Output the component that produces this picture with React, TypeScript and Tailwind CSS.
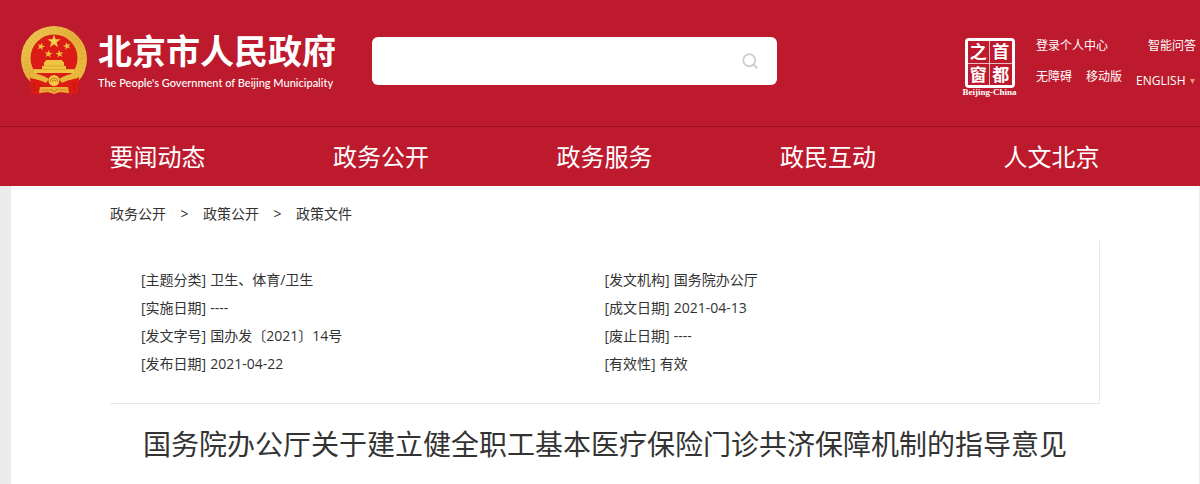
import { Search } from 'lucide-react';

const navItems = ['要闻动态', '政务公开', '政务服务', '政民互动', '人文北京'];

const breadcrumbs = ['政务公开', '政策公开', '政策文件'];

const details = [
  { label: '主题分类', value: '卫生、体育/卫生' },
  { label: '发文机构', value: '国务院办公厅' },
  { label: '实施日期', value: '----' },
  { label: '成文日期', value: '2021-04-13' },
  { label: '发文字号', value: '国办发〔2021〕14号' },
  { label: '废止日期', value: '----' },
  { label: '发布日期', value: '2021-04-22' },
  { label: '有效性', value: '有效' },
];

const starPoints = '0,-10 2.3,-3.1 9.5,-3.1 3.7,1.2 5.9,8.1 0,3.9 -5.9,8.1 -3.7,1.2 -9.5,-3.1 -2.3,-3.1';

const smallStars = [
  'translate(20 20.5) rotate(15) scale(.42)',
  'translate(46 20) rotate(-15) scale(.42)',
  'translate(27.5 28) rotate(8) scale(.42)',
  'translate(38.5 28) rotate(-8) scale(.42)',
];

function Emblem() {
  return (
    <svg className="h-[70px] w-[67px] shrink-0" viewBox="0 0 67 70" aria-hidden="true">
      <defs>
        <linearGradient id="gold" x1="0" y1="0" x2="1" y2="1">
          <stop offset="0" stopColor="#f0cb58" />
          <stop offset=".5" stopColor="#e3ae38" />
          <stop offset="1" stopColor="#efc244" />
        </linearGradient>
      </defs>
      <circle cx="33" cy="33" r="33" fill="url(#gold)" />
      <circle cx="33" cy="33" r="29" fill="none" stroke="#c98a25" strokeWidth="5" strokeDasharray="1 3" opacity=".2" />
      <circle cx="33" cy="32" r="23.5" fill="#da1b16" />
      <polygon points={starPoints} transform="translate(33 15.5) scale(.7)" fill="#f5cf4a" />
      {smallStars.map((transform) => (
        <polygon key={transform} points={starPoints} transform={transform} fill="#f0bd3c" />
      ))}
      {/* gate tower */}
      <path d="M25 34h16l1 2H24zM23 36h20v4h2v3h8v4H13v-4h8v-3h2z" fill="#f0c440" />
      <path d="M22 40h22M14 43.5h38" stroke="#d79a2a" strokeWidth=".6" />
      {/* ribbons, cogwheel and knot */}
      <path d="M9 51 10 67 19 69 21 67h24l2 2 10-2 1-16-10 3H18z" fill="#dc1b15" />
      <path d="M11 47c6 1 13 3 17 6l-3 4c-6-3-11-4-16-5zM55 47c-6 1-13 3-17 6l3 4c6-3 11-4 16-5z" fill="#e9b63b" />
      <path d="M19 61h28l1 6-9-1-6 2-6-2-9 1z" fill="#e9b136" />
      <circle cx="33" cy="54.5" r="5.5" fill="#f2c846" />
      <path d="M29 56a4 4 0 0 1 8 0M31 56a2 2 0 0 1 4 0" fill="none" stroke="#c67d1b" />
      <path d="M29 63l4 3 4-3" fill="none" stroke="#c8711b" />
      <path d="M13 57v8M53 57v8" stroke="#b71313" />
      <path d="M20 64h8M38 64h8" stroke="#cf7b1e" strokeWidth=".8" />
    </svg>
  );
}

function CapitalWindow() {
  return (
    <a href="#" className="flex w-[55px] shrink-0 flex-col items-center">
      <span className="grid size-[50px] grid-cols-2 grid-rows-2 gap-px rounded-sm border-[3px] border-white bg-white/70 text-[17px] leading-none font-bold">
        {['之', '首', '窗', '都'].map((char) => (
          <span key={char} className="flex items-center justify-center bg-[#bd1a2d]">
            {char}
          </span>
        ))}
      </span>
      <span className="font-['Liberation_Serif',serif] text-[9px] leading-2 font-bold whitespace-nowrap">
        Beijing-China
      </span>
    </a>
  );
}

function Header() {
  return (
    <header className="bg-[#bd1a2d] text-white">
      <div className="flex h-[126px] items-start pl-[21px]">
        <a href="#" className="mt-[26px] flex shrink-0 gap-[10px]">
          <Emblem />
          <span className="mt-1 block w-[242px]">
            <span className="block text-[34px] leading-[42px] font-bold whitespace-nowrap">北京市人民政府</span>
            <span className="block font-['Lato','Noto_Sans_CJK_SC',sans-serif] text-[11px] leading-[22px] font-medium whitespace-nowrap">
              The People's Government of Beijing Municipality
            </span>
          </span>
        </a>

        <form className="mt-[37px] ml-8 flex h-12 w-[405px] items-center rounded-md bg-white pr-[18px]">
          <input type="text" aria-label="搜索" className="h-full min-w-0 flex-1 px-4 text-base text-[#333] outline-none" />
          <button type="button" aria-label="搜索">
            <Search className="size-[18px] text-[#d0d0d0]" strokeWidth={2.5} />
          </button>
        </form>

        <div className="mt-[38px] ml-auto flex gap-[19px]">
          <CapitalWindow />
          <div className="w-[164px] text-[12px] leading-4">
            <div className="flex justify-between pr-1">
              <a href="#">登录个人中心</a>
              <a href="#">智能问答</a>
            </div>
            <div className="mt-[15px] flex items-start gap-[14px] whitespace-nowrap">
              <a href="#">无障碍</a>
              <a href="#">移动版</a>
              <a href="#" className="mt-1 flex items-center gap-1">
                <span>ENGLISH</span>
                <svg className="h-[5px] w-[5px]" viewBox="0 0 5 5" aria-hidden="true">
                  <path d="M0 0h5L2.5 5z" fill="#e39a78" />
                </svg>
              </a>
            </div>
          </div>
        </div>
      </div>

      <nav className="border-t border-[#9c1220] pl-[9px]">
        <ul className="mx-auto flex h-[59px] max-w-[990px] items-center justify-between pt-px text-2xl">
          {navItems.map((item) => (
            <li key={item}>
              <a href="#">{item}</a>
            </li>
          ))}
        </ul>
      </nav>
    </header>
  );
}

export default function App() {
  return (
    <div className="flex min-h-screen flex-col bg-[#ececec] font-['Open_Sans','Noto_Sans_CJK_SC',sans-serif] text-[#333]">
      <Header />
      <main className="mr-px ml-[11px] flex-1 bg-white">
        <div className="mx-auto max-w-[990px]">
          <nav aria-label="当前位置" className="flex h-[55px] items-center text-sm">
            {breadcrumbs.map((crumb, index) => (
              <span key={crumb} className="flex">
                {index > 0 && <span className="w-[37px] text-center">&gt;</span>}
                <a href="#">{crumb}</a>
              </span>
            ))}
          </nav>

          <dl className="grid grid-cols-2 border-r border-b border-[#e8e8e4] px-[31px] py-[25px] text-sm leading-7">
            {details.map(({ label, value }) => (
              <div key={label} className="flex gap-1">
                <dt>[{label}]</dt>
                <dd>{value}</dd>
              </div>
            ))}
          </dl>

          <h1 className="pt-5 text-center text-[28px] leading-10">
            国务院办公厅关于建立健全职工基本医疗保险门诊共济保障机制的指导意见
          </h1>
        </div>
      </main>
    </div>
  );
}
